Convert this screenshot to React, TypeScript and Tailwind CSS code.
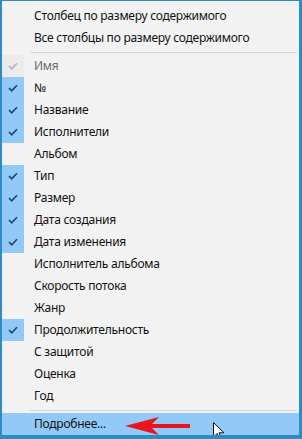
import React from 'react';

// Explorer column-chooser context menu (Windows 10 style)

type Item = { label: string; checked?: boolean; disabled?: boolean };

const columns: Item[] = [
  { label: 'Имя', checked: true, disabled: true },
  { label: '№', checked: true },
  { label: 'Название', checked: true },
  { label: 'Исполнители', checked: true },
  { label: 'Альбом' },
  { label: 'Тип', checked: true },
  { label: 'Размер', checked: true },
  { label: 'Дата создания', checked: true },
  { label: 'Дата изменения', checked: true },
  { label: 'Исполнитель альбома' },
  { label: 'Скорость потока' },
  { label: 'Жанр' },
  { label: 'Продолжительность', checked: true },
  { label: 'С защитой' },
  { label: 'Оценка' },
  { label: 'Год' },
];

const Check: React.FC<{ gray?: boolean }> = ({ gray }) => (
  <svg width="10" height="8" viewBox="0 0 10 8">
    <path d="M1 4 L3.7 6.8 L9 1.2" fill="none" stroke={gray ? '#b4b4b4' : '#22416a'} strokeWidth="1.6" />
  </svg>
);

const Row: React.FC<{ item: Item }> = ({ item }) => (
  <div className="flex h-[22px] items-center">
    <div
      className={`w-[22px] h-full flex items-center justify-center ${
        item.checked && !item.disabled ? 'bg-[#91c9f7]' : item.checked ? 'bg-[#ebebeb]' : ''
      }`}
    >
      {item.checked && <Check gray={item.disabled} />}
    </div>
    <span className={`pl-[10px] ${item.disabled ? 'text-[#6d6d6d]' : 'text-[#111]'}`}>{item.label}</span>
  </div>
);

const Separator = () => (
  <div className="h-[6px] flex items-center">
    <div className="ml-[28px] mr-[2px] flex-1 h-px bg-[#d7d7d7]" />
  </div>
);

export default function App() {
  return (
    <div className="relative w-[302px] h-[439px] overflow-hidden bg-[#f2f2f2] border-[#2d8cc4] border-l-2 border-t border-r-[3px] border-b-4 font-['Noto_Sans',sans-serif] text-[12px] tracking-[-0.25px] leading-none">
      <div className="pt-[4px]">
        <Row item={{ label: 'Столбец по размеру содержимого' }} />
        <Row item={{ label: 'Все столбцы по размеру содержимого' }} />
        <Separator />
        {columns.map(c => (
          <Row key={c.label} item={c} />
        ))}
        <Separator />
        <div className="flex h-[22px] items-center bg-[#91c9f7]">
          <div className="w-[22px]" />
          <span className="pl-[10px] text-[#111]">Подробнее...</span>
        </div>
      </div>

      {/* red annotation arrow */}
      <svg className="absolute left-[121px] top-[415px]" width="70" height="20" viewBox="0 0 70 20">
        <path d="M2 10 L36 1 L29 8 L67 8 L67 12 L29 12 L36 19 Z" fill="#e8141e" />
      </svg>

      {/* mouse pointer */}
      <svg className="absolute left-[211px] top-[421px]" width="12" height="19" viewBox="0 0 12 19">
        <path d="M0.5 0.5 L0.5 15 L4 11.5 L6.5 17.5 L8.5 16.5 L6 10.8 L11 10.8 Z" fill="#fff" stroke="#111" strokeWidth="1" />
      </svg>
    </div>
  );
}
